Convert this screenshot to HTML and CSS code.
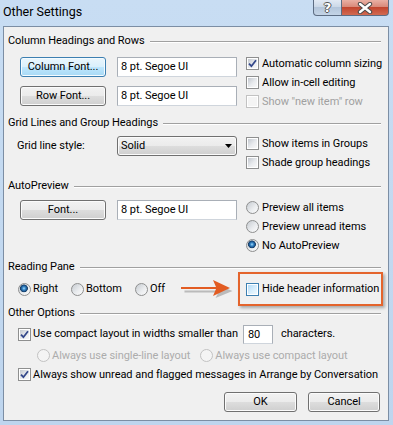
FILE: index.html
```html
<!DOCTYPE html>
<html>
<head>
<meta charset="utf-8">
<title>Other Settings</title>
<link rel="stylesheet" href="styles.css">
</head>
<body>

<div class="titlebar">
    <span class="title">Other Settings</span>
    <div class="caps">
        <span class="cap help">?</span>
        <span class="cap close"><svg width="16" height="12" viewBox="0 0 16 12"><path d="M3 2 L13 10 M13 2 L3 10" stroke="#4a4a4a" stroke-width="4.4" stroke-linecap="round"/><path d="M3 2 L13 10 M13 2 L3 10" stroke="#fff" stroke-width="2.4" stroke-linecap="round"/></svg></span>
    </div>
</div>

<div class="client">

    <!-- 列标题和行 -->
    <div class="legend"><span>Column Headings and Rows</span></div>
    <div class="cols sec1">
        <div class="left">
            <button class="btn focus">Column Font...</button><div class="textbox">8 pt. Segoe UI</div>
            <button class="btn">Row Font...</button><div class="textbox">8 pt. Segoe UI</div>
        </div>
        <ul class="opts">
            <li><span class="chk"><svg width="9" height="9" viewBox="0 0 9 9"><path d="M1 4.6 L3.4 7.2 L8 1.2" fill="none" stroke="#34488a" stroke-width="1.8"/></svg></span>Automatic column sizing</li>
            <li><span class="chk"></span>Allow in-cell editing</li>
            <li class="off"><span class="chk"></span>Show "new item" row</li>
        </ul>
    </div>

    <!-- 网格线 -->
    <div class="legend"><span>Grid Lines and Group Headings</span></div>
    <div class="cols sec2">
        <div class="left">
            <span class="label">Grid line style:</span>
            <div class="combo">Solid<svg class="drop" width="7" height="4" viewBox="0 0 7 4"><path d="M0 0 H7 L3.5 4 Z" fill="#000"/></svg></div>
        </div>
        <ul class="opts">
            <li><span class="chk"></span>Show items in Groups</li>
            <li><span class="chk"></span>Shade group headings</li>
        </ul>
    </div>

    <!-- 自动预览 -->
    <div class="legend"><span>AutoPreview</span></div>
    <div class="cols sec3">
        <div class="left">
            <button class="btn">Font...</button><div class="textbox">8 pt. Segoe UI</div>
        </div>
        <ul class="opts">
            <li><span class="rad"></span>Preview all items</li>
            <li><span class="rad"></span>Preview unread items</li>
            <li><span class="rad on"></span>No AutoPreview</li>
        </ul>
    </div>

    <!-- 阅读窗格 -->
    <div class="legend"><span>Reading Pane</span></div>
    <div class="pane-row">
        <span class="item"><span class="rad on"></span>Right</span>
        <span class="item"><span class="rad"></span>Bottom</span>
        <span class="item"><span class="rad"></span>Off</span>
        <svg class="arrow" width="52" height="22" viewBox="0 0 52 22">
            <path d="M2 10.5 H36 L33 4 L50 11 L33 18 L36 12.5 H2 Z" fill="#7a7a7a" opacity=".45" transform="translate(1.5 2)"/>
            <path d="M0 9 H35 L32 2 L49 10 L32 18 L35 11 H0 Z" fill="#e25c22"/>
        </svg>
        <div class="note"><span class="chk hot"></span>Hide header information</div>
    </div>

    <!-- 其他选项 -->
    <div class="legend"><span>Other Options</span></div>
    <div class="row r1">
        <span class="chk"><svg width="9" height="9" viewBox="0 0 9 9"><path d="M1 4.6 L3.4 7.2 L8 1.2" fill="none" stroke="#34488a" stroke-width="1.8"/></svg></span>
        <span>Use compact layout in widths smaller than</span>
        <div class="textbox num">80</div>
        <span class="after">characters.</span>
    </div>
    <div class="row r2 off">
        <span class="item"><span class="rad"></span>Always use single-line layout</span>
        <span class="item"><span class="rad"></span>Always use compact layout</span>
    </div>
    <div class="row r3">
        <span class="chk"><svg width="9" height="9" viewBox="0 0 9 9"><path d="M1 4.6 L3.4 7.2 L8 1.2" fill="none" stroke="#34488a" stroke-width="1.8"/></svg></span>
        <span>Always show unread and flagged messages in Arrange by Conversation</span>
    </div>
    <div class="actions">
        <button class="btn ok">OK</button>
        <button class="btn cancel">Cancel</button>
    </div>
</div>

</body>
</html>
```

FILE: styles.css
```css
body,ul,li{margin:0;padding:0;}
li{list-style:none;}
body{width:393px;height:425px;overflow:hidden;background:linear-gradient(#c8ddf3,#bed5ee);font:11px/16px Roboto,"Liberation Sans",sans-serif;letter-spacing:-0.05px;color:#000;white-space:nowrap;}

/* title bar */
.titlebar{height:26px;display:flex;justify-content:space-between;align-items:flex-start;}
.title{font-size:12.5px;line-height:16px;margin:4px 0 0 3px;letter-spacing:0;}
.caps{display:flex;margin-right:4px;}
.cap{height:16px;box-sizing:border-box;border:1px solid #5d6d83;border-top:0;display:flex;align-items:center;justify-content:center;}
.help{width:29px;border-radius:0 0 0 4px;background:linear-gradient(#e2eaf4,#ccd9e8 45%,#b4c6db 50%,#c4d4e6);color:#fff;font:bold 13px/14px "DejaVu Sans",sans-serif;text-shadow:1px 0 #555,-1px 0 #555,0 1px #555,0 -1px #555;}
.close{width:47px;border-left:0;border-radius:0 0 4px 0;background:linear-gradient(#eab0a4,#d98a7a 45%,#c2462f 50%,#d26a52);}

/* dialog body */
.client{margin-left:3px;width:384px;border:1px solid #7c8ea4;background:#f0f0f0;padding-top:6px;}
.legend{display:flex;align-items:center;height:16px;padding-left:4px;}
.legend:after{content:"";flex:1;margin:1px 7px 0 5px;border-top:1px solid #a0a0a0;border-bottom:1px solid #fff;}

.cols{display:flex;padding-left:16px;}
.left{display:grid;grid-template-columns:86px 120px;column-gap:11px;row-gap:9px;align-content:start;align-items:center;}
.opts{margin-left:9px;}
.opts li{display:flex;align-items:center;height:19px;gap:3px;}
.sec1{height:66px;}
.sec1 .left{margin-top:8px;}
.sec1 .opts{padding-top:5px;}
.sec2{height:47px;padding-left:13px;}
.sec2 .left{grid-template-columns:100px 120px;column-gap:0;margin-top:5px;}
.sec2 .opts{padding-top:3px;}
.sec3{height:65px;}
.sec3 .left{margin-top:6px;}
.sec3 .opts{padding-top:4px;}

/* controls */
.btn{box-sizing:border-box;height:20px;margin:0;padding:0;border:1px solid #707070;border-radius:3px;background:linear-gradient(#f2f2f2,#ebebeb 50%,#dddddd 51%,#cfcfcf);box-shadow:inset 0 0 0 1px #fbfbfb;font:inherit;letter-spacing:inherit;color:#000;text-align:center;}
.btn.focus{border-color:#3c7fb1;background:linear-gradient(#eaf6fd,#d9f0fc 50%,#bee6fd 51%,#a7d9f5);box-shadow:inset 0 0 0 1px #f4fbff;}
.textbox{box-sizing:border-box;height:20px;border:1px solid #a9afb7;border-bottom-color:#cfd5dc;background:#fff;padding-left:3px;line-height:18px;}
.combo{box-sizing:border-box;height:20px;display:flex;align-items:center;padding-left:3px;border:1px solid #707070;border-radius:3px;background:linear-gradient(#f2f2f2,#ebebeb 50%,#dddddd 51%,#cfcfcf);box-shadow:inset 0 0 0 1px #fbfbfb;}
.drop{margin-left:auto;margin-right:4px;}
.label{padding-left:0;}

.chk{flex:none;box-sizing:border-box;width:13px;height:13px;padding:1px;border:1px solid #8e8f8f;background:linear-gradient(135deg,#c3c8cf,#e9ebee 55%,#f8f8f8) content-box,#f6f6f6;box-shadow:inset 0 0 0 1px #fff;display:flex;align-items:center;justify-content:center;}
.chk svg{display:block;}
.chk.hot{border-color:#3c7fb1;background:linear-gradient(135deg,#b3dbf7,#d8eefc 55%,#eef8fe) content-box,#e6f3fc;}
.rad{flex:none;box-sizing:border-box;width:13px;height:13px;border-radius:50%;border:1px solid #8e8f8f;background:linear-gradient(135deg,#c6cbd1,#eceef0 60%,#fafafa);}
.rad.on{background:radial-gradient(circle at 45% 40%,#a9dcf9 0,#3b8ccc 1.5px,#175089 3px,#1c3e63 3.6px,rgba(0,0,0,0) 4.2px),linear-gradient(135deg,#c6cbd1,#eceef0 60%,#fafafa);}
.off{color:#a0a0a0;}
.off .chk,.off .rad{border-color:#c2c2c2;background:#f4f4f4;}

/* reading pane */
.pane-row{display:flex;align-items:center;height:28px;margin-bottom:2px;padding-left:14px;gap:13px;}
.item{display:flex;align-items:center;gap:2px;}
.arrow{margin-left:auto;margin-right:-8px;}
.note{box-sizing:border-box;width:145px;height:34px;margin-right:5px;padding-left:6px;display:flex;align-items:center;gap:3px;border:2px solid #e4642c;box-shadow:2px 2px 3px rgba(0,0,0,.3);}

/* other options */
.row{display:flex;align-items:center;padding-left:14px;gap:2px;}
.r1{height:20px;margin-top:3px;}
.r1 .num{width:30px;height:19px;margin-left:3px;padding-left:4px;line-height:17px;}
.r1 .after{margin-left:6px;}
.r2{height:19px;margin-top:2px;padding-left:33px;gap:10px;color:#acacac;}
.r3{height:19px;}
.actions{display:flex;justify-content:flex-end;gap:11px;padding:8px 8px 8px 0;}
.ok{width:73px;}
.cancel{width:72px;}
```
